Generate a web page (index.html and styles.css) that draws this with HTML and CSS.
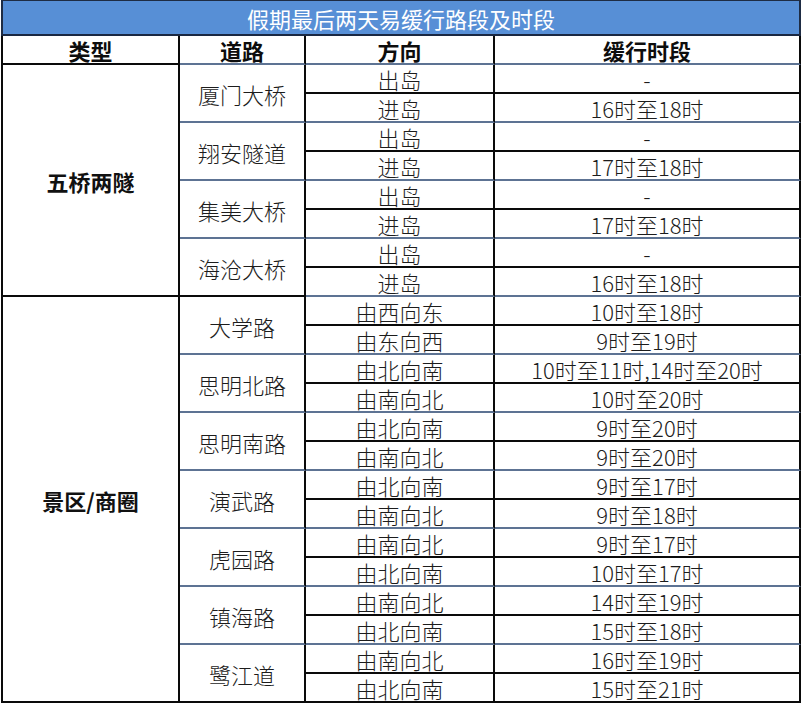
FILE: index.html
```html
<!DOCTYPE html>
<html lang="zh-CN">
<head>
<meta charset="utf-8">
<title>假期最后两天易缓行路段及时段</title>
<link rel="stylesheet" href="styles.css">
</head>
<body>
<table class="grid">
  <colgroup>
    <col class="w-type">
    <col class="w-road">
    <col class="w-dir">
    <col class="w-time">
  </colgroup>
  <thead>
    <tr class="title-row"><th colspan="4" class="title">假期最后两天易缓行路段及时段</th></tr>
    <tr class="head-row">
      <th class="type bk">类型</th>
      <th class="bl">道路</th>
      <th class="bl">方向</th>
      <th class="bl">缓行时段</th>
    </tr>
  </thead>
  <tbody>
    <tr><td rowspan="8" class="type bk"><b>五桥两隧</b></td><td rowspan="2" class="bl">厦门大桥</td><td class="bk">出岛</td><td class="bk">-</td></tr>
    <tr><td class="bl">进岛</td><td class="bl">16时至18时</td></tr>
    <tr><td rowspan="2" class="bl">翔安隧道</td><td class="bk">出岛</td><td class="bk">-</td></tr>
    <tr><td class="bl">进岛</td><td class="bl">17时至18时</td></tr>
    <tr><td rowspan="2" class="bl">集美大桥</td><td class="bk">出岛</td><td class="bk">-</td></tr>
    <tr><td class="bl">进岛</td><td class="bl">17时至18时</td></tr>
    <tr><td rowspan="2" class="bk">海沧大桥</td><td class="bk">出岛</td><td class="bk">-</td></tr>
    <tr><td class="bl">进岛</td><td class="bl">16时至18时</td></tr>

    <tr><td rowspan="14" class="type bk"><b>景区/商圈</b></td><td rowspan="2" class="bl">大学路</td><td class="bk">由西向东</td><td class="bk">10时至18时</td></tr>
    <tr><td class="bl">由东向西</td><td class="bl">9时至19时</td></tr>
    <tr><td rowspan="2" class="bl">思明北路</td><td class="bk">由北向南</td><td class="bk">10时至11时,14时至20时</td></tr>
    <tr><td class="bl">由南向北</td><td class="bl">10时至20时</td></tr>
    <tr><td rowspan="2" class="bl">思明南路</td><td class="bk">由北向南</td><td class="bk">9时至20时</td></tr>
    <tr><td class="bl">由南向北</td><td class="bl">9时至20时</td></tr>
    <tr><td rowspan="2" class="bl">演武路</td><td class="bk">由北向南</td><td class="bk">9时至17时</td></tr>
    <tr><td class="bl">由南向北</td><td class="bl">9时至18时</td></tr>
    <tr><td rowspan="2" class="bl">虎园路</td><td class="bk">由南向北</td><td class="bk">9时至17时</td></tr>
    <tr><td class="bl">由北向南</td><td class="bl">10时至17时</td></tr>
    <tr><td rowspan="2" class="bl">镇海路</td><td class="bk">由南向北</td><td class="bk">14时至19时</td></tr>
    <tr><td class="bl">由北向南</td><td class="bl">15时至18时</td></tr>
    <tr><td rowspan="2" class="bk">鹭江道</td><td class="bk">由南向北</td><td class="bk">16时至19时</td></tr>
    <tr><td class="bk">由北向南</td><td class="bk">15时至21时</td></tr>
  </tbody>
</table>
</body>
</html>
```

FILE: styles.css
```css
html, body {
  margin: 0;
  padding: 0;
  background: #ffffff;
}

body {
  font-family: "Noto Sans CJK SC", "Noto Sans", sans-serif;
  color: #1c1c1c;
}

.grid {
  margin-left: 1px;
  width: 800px;
  table-layout: fixed;
  border-collapse: separate;
  border-spacing: 0;
}

.w-type { width: 179px; }
.w-road { width: 126px; }
.w-dir  { width: 189px; }
.w-time { width: 306px; }

.grid th,
.grid td {
  box-sizing: border-box;
  padding: 1px 0 0;
  text-align: center;
  vertical-align: middle;
  font-size: 22px;
  font-weight: 300;
  line-height: 26px;
  white-space: nowrap;
  border-right: 2px solid #0a0a0a;
}

.grid tr { height: 29px; }

.grid .title-row { height: 36px; }

.grid .title {
  background: #578fd6;
  color: #ffffff;
  font-weight: 400;
  border-top: 1px solid #1e2c44;
  border-left: 2px solid #1e2c44;
  border-right: 2px solid #1e2c44;
  border-bottom: 2px solid #1a2842;
  padding-top: 0;
}

.grid .head-row th {
  font-weight: 700;
  color: #0d0d0d;
}

.grid .type {
  border-left: 2px solid #0a0a0a;
}

.grid .type b {
  font-weight: 700;
  color: #111111;
}

.grid .bk { border-bottom: 2px solid #0a0a0a; }
.grid .bl { border-bottom: 2px solid #5d7393; }
```
